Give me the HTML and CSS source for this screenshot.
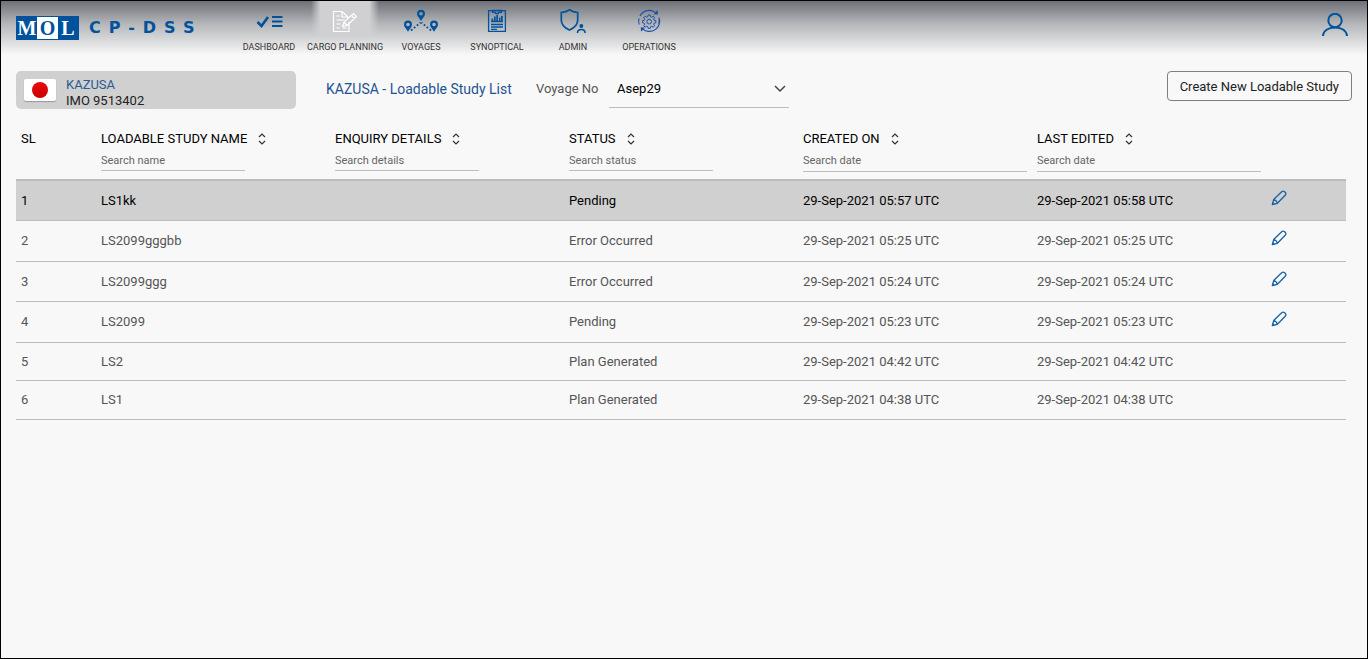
FILE: index.html
```html
<!DOCTYPE html>
<html lang="en">
<head>
<meta charset="utf-8">
<title>CP-DSS - Loadable Study List</title>
<link rel="stylesheet" href="styles.css">
</head>
<body>
<svg class="sprite" aria-hidden="true">
  <symbol id="sort" viewBox="0 0 8 12"><path d="M1 4 4 1l3 3M1 8l3 3 3-3" fill="none" stroke="currentColor" stroke-width="1.2"/></symbol>
  <symbol id="pencil" viewBox="0 0 18 18"><path d="M1.500 16.500 3 10.800 12 2Q13.600.7 15 1.700L16.300 3Q17.300 4.400 16 6L7.200 15ZM3 10.800Q6.500 11.500 7.200 15" fill="none" stroke="currentColor" stroke-width="1.500" stroke-linejoin="round"/><path d="m1 17 1-3.800 2.800 2.800z" fill="currentColor"/></symbol>
</svg>
<div class="page">
  <header class="topbar">
    <a class="brand" href="#">
      <span class="mol"><span class="mol-cell">M</span><span class="mol-cell mol-light">O</span><span class="mol-cell">L</span></span>
      <span class="brand-name">CP-DSS</span>
    </a>
    <nav class="nav">
      <a class="nav-item" href="#">
        <svg class="nav-icon" viewBox="0 0 36 24"><path d="M6.500 13 10.500 17 17 8" fill="none" stroke="currentColor" stroke-width="2.600"/><path d="M21 8h10.500M21 12.500h10.500M21 17h10.500" stroke="currentColor" stroke-width="2"/></svg>
        <span>DASHBOARD</span>
      </a>
      <a class="nav-item active" href="#" aria-current="page">
        <svg class="nav-icon" viewBox="0 0 36 24"><g fill="none" stroke="currentColor" stroke-width="1.200"><path d="M22 13V22.500H6.500V2.500H15L20.500 7.500V9M15 2.500V8h5M9.500 7h3M9.500 11h8M9.500 15h4M9.500 19h3M15.500 19h4M15.500 17.500l1.500-4.500L26.500 4.500l3 3L20 16.500zM17 13l3 3.500M24.500 6.500l3 3"/></g></svg>
        <span>CARGO PLANNING</span>
      </a>
      <a class="nav-item" href="#">
        <svg class="nav-icon" viewBox="0 0 36 24"><g fill="currentColor" fill-rule="evenodd"><path d="M18 .8a4 4 0 0 1 4 4c0 2.800-2.500 4.300-4 7.200-1.500-2.900-4-4.400-4-7.200a4 4 0 0 1 4-4zm0 2.200a1.800 1.800 0 1 0 0 3.600 1.800 1.800 0 0 0 0-3.600z"/><path d="M5 11.500a4 4 0 0 1 4 4c0 2.800-2.500 4.300-4 7.200-1.500-2.900-4-4.400-4-7.200a4 4 0 0 1 4-4zm0 2.200a1.800 1.800 0 1 0 0 3.600 1.800 1.800 0 0 0 0-3.600zM31 11.500a4 4 0 0 1 4 4c0 2.800-2.500 4.300-4 7.200-1.500-2.900-4-4.400-4-7.200a4 4 0 0 1 4-4zm0 2.200a1.800 1.800 0 1 0 0 3.600 1.800 1.800 0 0 0 0-3.600z"/></g><path d="M8 21.500 17.500 13.500M28 21.500 18.500 13.500" stroke="currentColor" stroke-width="1.900" stroke-dasharray="1.800 2"/></svg>
        <span>VOYAGES</span>
      </a>
      <a class="nav-item" href="#">
        <svg class="nav-icon" viewBox="0 0 36 24"><g fill="none" stroke="currentColor" stroke-width="1.300"><path d="M9.600 1.600h16.800v20.800H9.600z"/><path d="M13.500 1.500h9v1.800h-2.500l-.8 1.200h-2.400L16 3.300h-2.500zM12 12.500h12M12 15.500h12M12 18h12M12 20.300h6"/></g><path d="M12.500 12V9.500h1.700V12zM15 12V7.500h1.700V12zM17.300 12V6h1.700v6zM20 12V8.500h1.500V12zM22 12V7h1.700v5z" fill="currentColor"/></svg>
        <span>SYNOPTICAL</span>
      </a>
      <a class="nav-item" href="#">
        <svg class="nav-icon" viewBox="0 0 36 24"><path d="M14.500.8C12 2.500 9.500 3.200 6.300 3.500V11c0 5 3.500 8 8.200 10 4.700-2 8.200-5 8.200-10V3.500C19.500 3.200 17 2.500 14.500.8z" fill="none" stroke="currentColor" stroke-width="1.700"/><circle cx="26.300" cy="17" r="2" fill="currentColor"/><path d="M22.500 24c0-2.500 1.400-3.500 3.800-3.500s3.800 1 3.800 3.500" fill="none" stroke="currentColor" stroke-width="1.600"/></svg>
        <span>ADMIN</span>
      </a>
      <a class="nav-item" href="#">
        <svg class="nav-icon" viewBox="0 0 36 24"><g fill="none" stroke="#1a4fae" stroke-width="1.100"><path d="M8.200 15.500A10.300 10.300 0 0 1 8 9.500M9 7A10.300 10.300 0 0 1 24.500 3.600M28 8.500A10.300 10.300 0 0 1 11.500 19.800M27.800 15A10.300 10.300 0 0 0 28 10"/><g transform="translate(1.800 .8) scale(.9)"><path d="M17 5.800h2.400l.4 1.900 1.300.5 1.600-1.100 1.600 1.700-1.100 1.600.5 1.300 1.900.4v2.300l-1.900.4-.5 1.200 1.100 1.700-1.600 1.600-1.600-1.100-1.300.5-.4 1.900H17l-.4-1.900-1.300-.5-1.600 1.100-1.600-1.600 1.100-1.700-.5-1.200-1.900-.4v-2.300l1.900-.4.5-1.300-1.100-1.600 1.600-1.700 1.600 1.100 1.300-.5z"/><circle cx="18.200" cy="13.200" r="2.600"/></g></g><path d="m26.500 1 .5 4.500-4.500-.3zM10 22.500l-.2-4.300 4.200.6z" fill="#1a4fae"/></svg>
        <span>OPERATIONS</span>
      </a>
    </nav>
    <button class="user" type="button" aria-label="User profile">
      <svg class="user-icon" viewBox="0 0 26 24"><g fill="none" stroke="currentColor" stroke-width="2"><circle cx="13" cy="7.500" r="6.700"/><path d="M1 23C1.500 18 6 14.600 13 14.600S24.500 18 25 23"/></g></svg>
    </button>
  </header>

  <main class="content">
    <div class="toolbar">
      <div class="vessel">
        <span class="flag"><span class="sun"></span></span>
        <div class="vessel-text"><div class="vessel-name">KAZUSA</div><div>IMO 9513402</div></div>
      </div>
      <h1 class="title">KAZUSA - Loadable Study List</h1>
      <label class="voyage-label" for="voyage">Voyage No</label>
      <div class="select-wrap">
        <select class="voyage" id="voyage"><option>Asep29</option></select>
        <svg class="chevron" viewBox="0 0 12 8"><path d="m1 1 5 5 5-5" fill="none" stroke="currentColor" stroke-width="1.500"/></svg>
      </div>
      <button class="create" type="button">Create New Loadable Study</button>
    </div>

    <table class="studies">
      <colgroup><col class="col-edge"><col><col><col><col><col><col class="col-edge"></colgroup>
      <thead>
        <tr>
          <th><div class="head">SL</div></th>
          <th><div class="head">LOADABLE STUDY NAME <svg class="sort"><use href="#sort"/></svg></div><input class="search" type="text" placeholder="Search name" aria-label="Search name"></th>
          <th><div class="head">ENQUIRY DETAILS <svg class="sort"><use href="#sort"/></svg></div><input class="search" type="text" placeholder="Search details" aria-label="Search details"></th>
          <th><div class="head">STATUS <svg class="sort"><use href="#sort"/></svg></div><input class="search" type="text" placeholder="Search status" aria-label="Search status"></th>
          <th><div class="head">CREATED ON <svg class="sort"><use href="#sort"/></svg></div><input class="search search-date" type="text" placeholder="Search date" aria-label="Search created date"></th>
          <th><div class="head">LAST EDITED <svg class="sort"><use href="#sort"/></svg></div><input class="search search-date" type="text" placeholder="Search date" aria-label="Search edited date"></th>
          <th></th>
        </tr>
      </thead>
      <tbody>
        <tr class="editable selected"><td>1</td><td>LS1kk</td><td></td><td>Pending</td><td>29-Sep-2021 05:57 UTC</td><td>29-Sep-2021 05:58 UTC</td><td><button class="edit" type="button" aria-label="Edit LS1kk"><svg class="pencil"><use href="#pencil"/></svg></button></td></tr>
        <tr class="editable"><td>2</td><td>LS2099gggbb</td><td></td><td>Error Occurred</td><td>29-Sep-2021 05:25 UTC</td><td>29-Sep-2021 05:25 UTC</td><td><button class="edit" type="button" aria-label="Edit LS2099gggbb"><svg class="pencil"><use href="#pencil"/></svg></button></td></tr>
        <tr class="editable"><td>3</td><td>LS2099ggg</td><td></td><td>Error Occurred</td><td>29-Sep-2021 05:24 UTC</td><td>29-Sep-2021 05:24 UTC</td><td><button class="edit" type="button" aria-label="Edit LS2099ggg"><svg class="pencil"><use href="#pencil"/></svg></button></td></tr>
        <tr class="editable"><td>4</td><td>LS2099</td><td></td><td>Pending</td><td>29-Sep-2021 05:23 UTC</td><td>29-Sep-2021 05:23 UTC</td><td><button class="edit" type="button" aria-label="Edit LS2099"><svg class="pencil"><use href="#pencil"/></svg></button></td></tr>
        <tr><td>5</td><td>LS2</td><td></td><td>Plan Generated</td><td>29-Sep-2021 04:42 UTC</td><td>29-Sep-2021 04:42 UTC</td><td></td></tr>
        <tr><td>6</td><td>LS1</td><td></td><td>Plan Generated</td><td>29-Sep-2021 04:38 UTC</td><td>29-Sep-2021 04:38 UTC</td><td></td></tr>
      </tbody>
    </table>
  </main>
</div>
</body>
</html>
```
FILE: styles.css
```css
* { box-sizing: border-box; }
body {
  margin: 0;
  font-family: Roboto, "Liberation Sans", sans-serif;
  font-size: 13px;
  line-height: 16px;
  color: #555;
}
button, input, select { font: inherit; color: inherit; background: none; border: 0; margin: 0; padding: 0; }
a { color: inherit; text-decoration: none; }
svg { display: block; }
.sprite { position: absolute; width: 0; height: 0; }

.page { min-height: 100vh; border: 1px solid #000; background: #f8f8f8; }

.topbar {
  display: flex;
  height: 54px;
  padding: 0 19px 0 15px;
  background: linear-gradient(#6d7077, #b4b6b9 42%, #f8f8f8);
}
.brand { display: flex; align-items: center; gap: 10px; width: 215px; height: 54px; color: #00529c; }
.mol { display: flex; border: 1px solid #00529c; font: bold 20px/22px "Liberation Serif", serif; }
.mol-cell { width: 20px; text-align: center; background: #00529c; color: #fff; }
.mol-light { width: 21px; background: #fff; color: #00529c; }
.brand-name { font: bold 16px/24px "DejaVu Sans", sans-serif; letter-spacing: 8px; }

.nav { display: flex; }
.nav-item {
  display: flex;
  flex-direction: column;
  align-items: center;
  gap: 7px;
  width: 76px;
  padding-top: 8px;
  color: #00529c;
  font-size: 9px;
  line-height: 14px;
  white-space: nowrap;
}
.nav-item span { color: #333; }
.nav-icon { width: 36px; height: 24px; }
.active {
  color: #fff;
  background: linear-gradient(90deg, rgba(210, 210, 212, 0), #d0d0d3 14%, #d0d0d3 86%, rgba(210, 210, 212, 0)) top center / 68px 36px no-repeat;
}
.user { align-self: flex-start; margin: 12px 0 0 auto; color: #00529c; }
.user-icon { width: 26px; height: 24px; }

.content { padding: 16px 15px 0; }
.toolbar { display: flex; align-items: flex-start; height: 38px; white-space: nowrap; }
.vessel { display: flex; align-items: center; gap: 10px; width: 280px; height: 38px; padding: 0 8px; border-radius: 5px; background: #d0d0d0; color: #222; }
.vessel-name { color: #2c5a92; }
.vessel-text { padding-top: 6px; }
.flag { display: flex; align-items: center; justify-content: center; width: 32px; height: 22px; border-radius: 2px; background: #fff; box-shadow: 0 1px 1px #999; }
.sun { width: 16px; height: 16px; border-radius: 50%; background: linear-gradient(#e60d0d, #cc0000); }
.title { width: 210px; margin: 10px 0 0 30px; font-size: 14px; font-weight: 400; line-height: 16px; color: #1f5490; }
.voyage-label { width: 73px; margin-top: 10px; }
.select-wrap { position: relative; width: 180px; }
.voyage { width: 100%; height: 37px; padding: 0 8px; appearance: none; border-bottom: 1px solid #bdbdbd; border-radius: 0; color: #000; }
.chevron { position: absolute; top: 14px; right: 3px; width: 12px; height: 8px; color: #444; pointer-events: none; }
.create { height: 30px; margin-left: auto; padding: 2px 12px 0; border: 1px solid #7b7f8a; border-radius: 4px; color: #222; }

.studies { width: calc(100% - 6px); margin-top: 16px; table-layout: fixed; border-collapse: separate; border-spacing: 0; }
.col-edge { width: 80px; }
th { height: 56px; padding: 6px 5px 0; border-bottom: 2px solid #bdbdbd; text-align: left; vertical-align: top; font-weight: 400; color: #000; white-space: nowrap; }
.head { display: flex; align-items: center; gap: 11px; height: 16px; }
.sort { width: 8px; height: 12px; color: #333; }
.search { display: block; width: 144px; height: 24px; padding-top: 4px; border-bottom: 1px solid #bdbdbd; font-size: 11px; color: #666; }
.search-date { width: 100%; height: 25px; padding-top: 3px; }
.search::placeholder { color: #666; opacity: 1; }
td { height: 38px; padding: 0 5px; border-bottom: 1px solid #bdbdbd; }
tr:nth-child(even) td { height: 39px; }
.editable td { height: 40px; }
.editable:nth-child(even) td { height: 41px; }
.selected td { background: #d0d0d0; color: #000; }
.edit { display: block; padding-bottom: 6px; color: #1b64a5; cursor: pointer; }
.pencil { width: 16px; height: 16px; }
```
